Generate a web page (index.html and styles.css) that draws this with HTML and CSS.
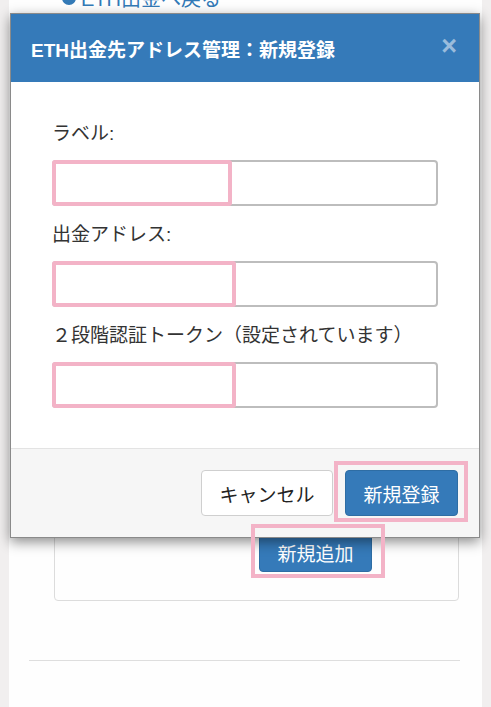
FILE: index.html
```html
<!DOCTYPE html>
<html lang="ja">
<head>
<meta charset="utf-8">
<title>ETH出金先アドレス管理</title>
<link rel="stylesheet" href="styles.css">
</head>
<body>
<div class="page">
  <a class="back" href="#"><span class="dot"></span>ETH出金へ戻る</a>
  <div class="card">
    <div class="card-actions">
      <button class="btn btn-primary add">新規追加</button>
      <span class="mark mark-add"></span>
    </div>
  </div>
  <hr class="rule">
</div>

<div class="modal">
  <div class="modal-header">
    <h4 class="modal-title">ETH出金先アドレス管理：新規登録</h4>
    <span class="close">×</span>
  </div>
  <div class="modal-body">
    <div class="group">
      <label class="label">ラベル:</label>
      <div class="field"><input class="input" type="text"><span class="mark mark-input w1"></span></div>
    </div>
    <div class="group">
      <label class="label">出金アドレス:</label>
      <div class="field"><input class="input" type="text"><span class="mark mark-input w2"></span></div>
    </div>
    <div class="group">
      <label class="label">２段階認証トークン（設定されています）</label>
      <div class="field"><input class="input" type="text"><span class="mark mark-input w2"></span></div>
    </div>
  </div>
  <div class="modal-footer">
    <button class="btn btn-default">キャンセル</button>
    <div class="submit-wrap">
      <button class="btn btn-primary submit">新規登録</button>
      <span class="mark mark-submit"></span>
    </div>
  </div>
</div>
</body>
</html>
```

FILE: styles.css
```css
* { box-sizing: border-box; }

html, body {
  margin: 0;
  padding: 0;
}

body {
  background: #f1efef;
  font-family: "Liberation Sans", "Noto Sans CJK JP", sans-serif;
  color: #333;
  height: 707px;
  overflow: hidden;
  position: relative;
}

.page {
  margin-left: 9px;
  width: 473px;
  height: 707px;
  background: #fefefe;
  overflow: hidden;
}

.back {
  display: flex;
  align-items: center;
  gap: 5px;
  margin-top: -15px;
  margin-left: 53px;
  height: 24px;
  font-size: 20px;
  color: #337ab7;
  text-decoration: none;
}

.dot {
  width: 14px;
  height: 14px;
  border-radius: 50%;
  background: #337ab7;
  margin-top: 2px;
}

.card {
  margin-top: 382px;
  margin-left: 45px;
  width: 405px;
  border: 1px solid #dcdcdc;
  border-radius: 4px;
  padding: 140px 0 28px 204px;
}

.card-actions {
  position: relative;
  width: 113px;
}

.rule {
  margin: 59px 0 0 20px;
  width: 431px;
  border: 0;
  border-top: 1px solid #dedede;
}

.btn {
  font-family: "Liberation Sans", "Noto Sans CJK JP", sans-serif;
  font-size: 19px;
  border-radius: 4px;
  border: 1px solid transparent;
  padding: 0;
  height: 46px;
  cursor: pointer;
}

.btn-primary {
  background: #357ab9;
  border-color: #2e6da4;
  color: #fff;
}

.btn-default {
  background: #fff;
  border-color: #cfcfcf;
  color: #222;
}

.add {
  width: 113px;
  height: 40px;
  display: block;
}

.mark {
  position: absolute;
  border: 4px solid #f3b3c7;
  pointer-events: none;
  z-index: 20;
}

.mark-add {
  left: -8px;
  top: -8px;
  width: 134px;
  height: 54px;
}

.modal {
  position: absolute;
  left: 10px;
  top: 13px;
  width: 470px;
  background: #fff;
  border: 1px solid #8a8a8a;
  box-shadow: 0 4px 12px rgba(0, 0, 0, 0.45);
  z-index: 10;
}

.modal-header {
  height: 68px;
  background: #357ab9;
  display: flex;
  align-items: center;
  justify-content: space-between;
  padding: 0 22px 0 20px;
}

.modal-title {
  margin: 0;
  font-size: 19px;
  font-weight: bold;
  color: #fff;
}

.close {
  font-size: 27px;
  font-weight: bold;
  line-height: 1;
  color: rgba(255, 255, 255, 0.5);
  margin-top: -4px;
}

.modal-body {
  padding: 40px 41px 23px 41px;
}

.group {
  margin-bottom: 17px;
}

.label {
  display: block;
  height: 24px;
  line-height: 24px;
  font-size: 19px;
  color: #333;
  margin-bottom: 14px;
}

.field {
  position: relative;
  height: 46px;
}

.input {
  display: block;
  width: 100%;
  height: 46px;
  border: 2px solid #bdbdbd;
  border-radius: 4px;
  background: #fff;
  font-size: 18px;
}

.mark-input {
  left: 0;
  top: 0;
  height: 46px;
  border-width: 4px;
  border-radius: 3px;
}

.w1 { width: 180px; }
.w2 { width: 184px; }

.modal-footer {
  border-top: 1px solid #e3e3e3;
  background: #f6f6f6;
  height: 89px;
  display: flex;
  justify-content: flex-end;
  align-items: flex-start;
  gap: 12px;
  padding: 21px 21px 0 0;
}

.btn-default { width: 132px; }

.submit-wrap {
  position: relative;
}

.submit {
  width: 113px;
  display: block;
}

.mark-submit {
  left: -11px;
  top: -9px;
  width: 134px;
  height: 61px;
}
```
